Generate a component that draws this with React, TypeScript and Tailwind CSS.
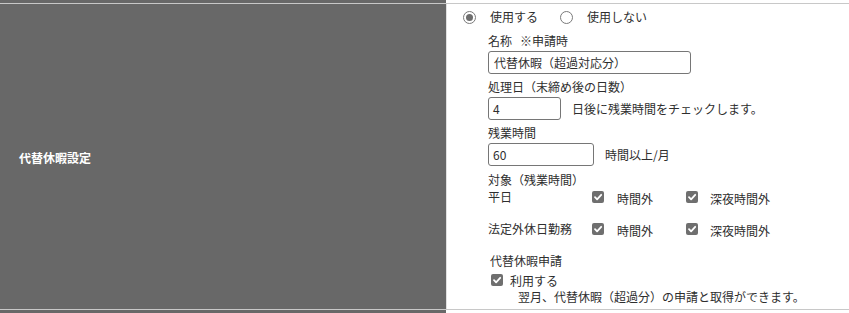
import React from "react";

const font = { fontFamily: '"Noto Sans CJK JP", "Noto Sans", sans-serif' };

function Radio({ checked }: { checked?: boolean }) {
  return (
    <span className="flex h-[13px] w-[13px] items-center justify-center rounded-full border border-[#7a7a7a] bg-white">
      {checked && <span className="h-[7px] w-[7px] rounded-full bg-[#6e6e6e]" />}
    </span>
  );
}

function Check() {
  return (
    <span className="flex h-[12px] w-[12px] items-center justify-center rounded-[2px] bg-[#6f6f6f]">
      <svg width="10" height="10" viewBox="0 0 10 10">
        <path d="M2 5.2 L4.1 7.3 L8.2 2.8" stroke="white" strokeWidth="1.8" fill="none" strokeLinecap="round" strokeLinejoin="round" />
      </svg>
    </span>
  );
}

function CheckRow({ label }: { label: string }) {
  return (
    <div className="flex h-[20px] items-center">
      <div className="w-[104px]">{label}</div>
      <div className="flex w-[94px] items-center">
        <Check />
        <span className="ml-[13px] pt-[4px]">時間外</span>
      </div>
      <div className="flex items-center">
        <Check />
        <span className="ml-[12px] pt-[4px]">深夜時間外</span>
      </div>
    </div>
  );
}

export default function App() {
  return (
    <div className="w-[849px] h-[313px] overflow-hidden bg-white text-[12px] leading-[16px] text-[#2e2e2e]" style={font}>
      <div className="flex h-[3px]">
        <div className="w-[446px] bg-[#686868]" />
      </div>
      <div className="h-px bg-[#c8c8c8]" />
      <div className="flex h-[305px]">
        <div className="flex w-[446px] items-center bg-[#686868] pl-[19px] pt-[2px] font-bold text-white">
          代替休暇設定
        </div>
        <div className="w-px bg-[#e0e0e0]" />
        <div className="flex-1 bg-white">
          <div className="ml-[16px] mt-[5px] flex h-[16px] items-center">
            <Radio checked />
            <span className="ml-[14px]">使用する</span>
            <span className="ml-[22px]"><Radio /></span>
            <span className="ml-[14px]">使用しない</span>
          </div>
          <div className="ml-[41px]">
            <div className="mt-[8px] flex">
              <span>名称</span>
              <span className="ml-[8px]">※申請時</span>
            </div>
            <div className="mt-[2px] flex h-[23px] w-[203px] items-center rounded-[3px] border border-[#767676] pl-[5px]">
              代替休暇（超過対応分）
            </div>
            <div className="mt-[5px]">処理日（末締め後の日数）</div>
            <div className="mt-[2px] flex items-center">
              <div className="flex h-[23px] w-[73px] items-center rounded-[3px] border border-[#767676] pl-[4px]">4</div>
              <span className="ml-[11px]">日後に残業時間をチェックします。</span>
            </div>
            <div className="mt-[5px]">残業時間</div>
            <div className="mt-[2px] flex items-center">
              <div className="flex h-[23px] w-[106px] items-center rounded-[3px] border border-[#767676] pl-[4px]">60</div>
              <span className="ml-[11px]">時間以上/月</span>
            </div>
            <div className="mt-[6px]">対象（残業時間）</div>
            <div className="-mt-[1px]"><CheckRow label="平日" /></div>
            <div className="mt-[12px]"><CheckRow label="法定外休日勤務" /></div>
            <div className="mt-[14px] pl-[2px]">代替休暇申請</div>
            <div className="mt-[3px] flex h-[16px] items-center pl-[3px]">
              <Check />
              <span className="ml-[7px] pt-[1px]">利用する</span>
            </div>
            <div className="mt-[1px] pl-[30px]">翌月、代替休暇（超過分）の申請と取得ができます。</div>
          </div>
        </div>
      </div>
      <div className="h-px bg-[#c8c8c8]" />
      <div className="flex h-[3px]">
        <div className="w-[446px] bg-[#686868]" />
      </div>
    </div>
  );
}
